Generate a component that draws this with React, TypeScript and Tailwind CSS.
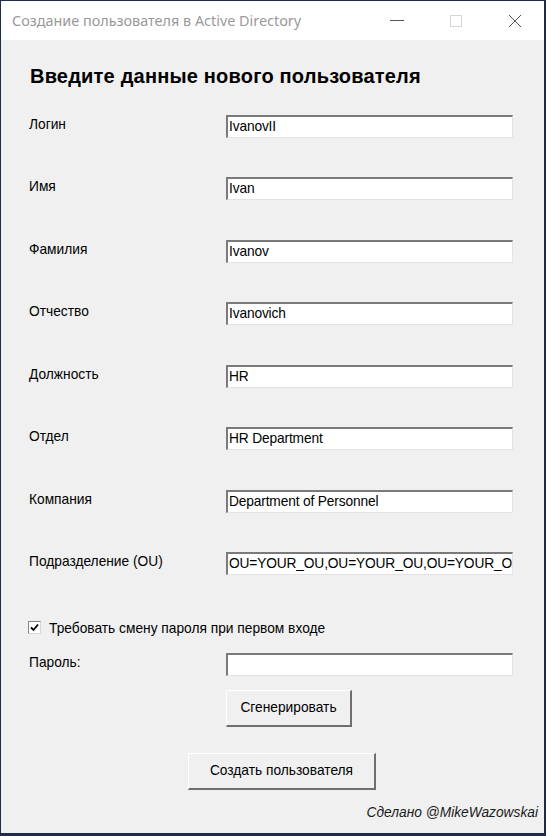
import React from "react";

const rows = [
  { label: "Логин", value: "IvanovII", h: "h-[62px]" },
  { label: "Имя", value: "Ivan", h: "h-[63px]" },
  { label: "Фамилия", value: "Ivanov", h: "h-[62px]" },
  { label: "Отчество", value: "Ivanovich", h: "h-[63px]" },
  { label: "Должность", value: "HR", h: "h-[62px]" },
  { label: "Отдел", value: "HR Department", h: "h-[63px]" },
  { label: "Компания", value: "Department of Personnel", h: "h-[62px]" },
  { label: "Подразделение (OU)", value: "OU=YOUR_OU,OU=YOUR_OU,OU=YOUR_O", h: "h-[69px]" },
];

function Field({ value }: { value: string }) {
  return (
    <div className="w-[287px] h-[23px] bg-white border-t-2 border-l-2 border-t-[#7a7a7a] border-l-[#7a7a7a] border-b border-r border-b-[#e3e3e3] border-r-[#e3e3e3] overflow-hidden whitespace-nowrap pl-[1px] text-[13.75px] tracking-[-0.15px] leading-[20px] text-black">
      {value}
    </div>
  );
}

function Btn({ children, w }: { children: React.ReactNode; w: string }) {
  return (
    <div
      className={`${w} h-[37px] bg-[#f0f0f0] border-t border-l border-t-white border-l-white border-b-2 border-r-2 border-b-[#6f6f6f] border-r-[#6f6f6f] flex items-center justify-center text-[13.75px] text-black`}
    >
      {children}
    </div>
  );
}

export default function App() {
  return (
    <div
      className="w-[546px] h-[836px] flex flex-col border-t border-l border-r-2 border-b-[3px] border-[#1d2c48] bg-[#f0f0f0]"
      style={{ fontFamily: '"Liberation Sans", Arial, sans-serif' }}
    >
      <div className="h-[39px] bg-white flex items-center shrink-0">
        <div
          className="pl-[11px] text-[14.4px] text-[#999999]"
          style={{ fontFamily: '"Noto Sans", "Open Sans", sans-serif' }}
        >
          Создание пользователя в Active Directory
        </div>
        <div className="ml-auto flex h-full">
          <div className="w-[58px] h-full flex items-center justify-center">
            <div className="w-[14px] h-px bg-[#555]" />
          </div>
          <div className="w-[59px] h-full flex items-center justify-center">
            <div className="w-[12px] h-[12px] border border-[#d6d6d6]" />
          </div>
          <div className="w-[59px] h-full flex items-center justify-center">
            <svg width="14" height="14" viewBox="0 0 14 14">
              <path d="M1 1 L13 13 M13 1 L1 13" stroke="#555" strokeWidth="1" fill="none" />
            </svg>
          </div>
        </div>
      </div>
      <div className="flex-1 pl-[28px] pt-[26px] flex flex-col">
        <div className="text-[20px] leading-[20px] font-bold tracking-[0.2px] text-black pl-[1px]">
          Введите данные нового пользователя
        </div>
        <div className="mt-[29px] flex flex-col">
          {rows.map((r) => (
            <div key={r.label} className={`${r.h} flex items-start`}>
              <div className="w-[197px] pt-[2px] text-[13.75px] leading-[15px] text-black">{r.label}</div>
              <Field value={r.value} />
            </div>
          ))}
        </div>
        <div className="flex items-start h-[15px]">
          <div className="w-[13px] h-[13px] -ml-[1px] bg-white border border-t-[#848484] border-l-[#848484] border-b-[#d8d8d8] border-r-[#d8d8d8] flex items-center justify-center">
            <svg width="9" height="9" viewBox="0 0 9 9">
              <path d="M1 4.5 L3.5 7 L8 1.5" stroke="#000" strokeWidth="1.8" fill="none" />
            </svg>
          </div>
          <div className="ml-[8px] text-[13.75px] leading-[15px] text-black">
            Требовать смену пароля при первом входе
          </div>
        </div>
        <div className="mt-[17px] flex items-start">
          <div className="w-[197px] pt-[2px] text-[13.75px] leading-[15px] text-black">Пароль:</div>
          <Field value="" />
        </div>
        <div className="mt-[14px] pl-[197px]">
          <Btn w="w-[126px]">Сгенерировать</Btn>
        </div>
        <div className="mt-[26px] pl-[159px]">
          <Btn w="w-[188px]">Создать пользователя</Btn>
        </div>
        <div className="mt-[15px] pr-[6px] text-right italic text-[13.75px] leading-[15px] text-[#1a1a1a]">
          Сделано @MikeWazowskai
        </div>
      </div>
    </div>
  );
}
